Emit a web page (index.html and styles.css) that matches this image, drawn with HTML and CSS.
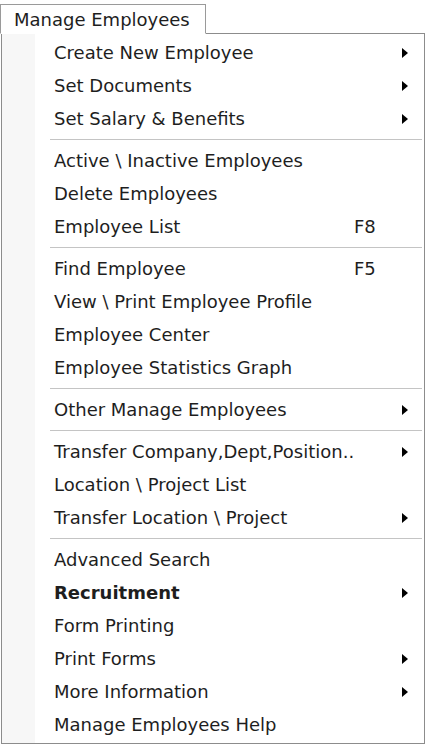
FILE: index.html
```html
<!DOCTYPE html>
<html lang="en">
<head>
<meta charset="UTF-8">
<meta name="viewport" content="width=device-width, initial-scale=1.0">
<title>Manage Employees</title>
<link rel="stylesheet" href="styles.css">
</head>
<body>
<div class="tab">Manage Employees</div>
<ul class="menu">
    <li class="item sub"><span class="label">Create New Employee</span><span class="key"></span><span class="arrow"></span></li>
    <li class="item sub"><span class="label">Set Documents</span><span class="key"></span><span class="arrow"></span></li>
    <li class="item sub"><span class="label">Set Salary &amp; Benefits</span><span class="key"></span><span class="arrow"></span></li>
    <li class="sep"></li>
    <li class="item"><span class="label">Active \ Inactive Employees</span></li>
    <li class="item"><span class="label">Delete Employees</span></li>
    <li class="item"><span class="label">Employee List</span><span class="key">F8</span></li>
    <li class="sep"></li>
    <li class="item"><span class="label">Find Employee</span><span class="key">F5</span></li>
    <li class="item"><span class="label">View \ Print Employee Profile</span></li>
    <li class="item"><span class="label">Employee Center</span></li>
    <li class="item"><span class="label">Employee Statistics Graph</span></li>
    <li class="sep"></li>
    <li class="item sub"><span class="label">Other Manage Employees</span><span class="key"></span><span class="arrow"></span></li>
    <li class="sep"></li>
    <li class="item sub"><span class="label">Transfer Company,Dept,Position..</span><span class="key"></span><span class="arrow"></span></li>
    <li class="item"><span class="label">Location \ Project List</span></li>
    <li class="item sub"><span class="label">Transfer Location \ Project</span><span class="key"></span><span class="arrow"></span></li>
    <li class="sep"></li>
    <li class="item"><span class="label">Advanced Search</span></li>
    <li class="item sub bold"><span class="label">Recruitment</span><span class="key"></span><span class="arrow"></span></li>
    <li class="item"><span class="label">Form Printing</span></li>
    <li class="item sub"><span class="label">Print Forms</span><span class="key"></span><span class="arrow"></span></li>
    <li class="item sub"><span class="label">More Information</span><span class="key"></span><span class="arrow"></span></li>
    <li class="item"><span class="label">Manage Employees Help</span></li>
</ul>
</body>
</html>
```

FILE: styles.css
```css
body {
    margin: 0;
    background: #fff;
    font-family: "DejaVu Sans", Verdana, sans-serif;
    font-size: 18px;
    color: #1e1e1e;
}

.tab {
    position: relative;
    z-index: 1;
    width: 191px;
    height: 28px;
    margin-top: 4px;
    padding-left: 13px;
    line-height: 29px;
    border: 1px solid #9a9a9a;
    border-bottom: 1px solid #fff;
    margin-bottom: -1px;
    background: #fff;
    box-sizing: content-box;
}

.menu {
    list-style: none;
    margin: 0 0 0 1px;
    padding: 2px 0;
    width: 424px;
    border: 1px solid #8c8c8c;
    box-sizing: border-box;
    background: linear-gradient(to right, #f7f7f7 33px, #fff 33px);
}

.item {
    display: grid;
    grid-template-columns: minmax(0, 1fr) 44px 26px;
    align-items: center;
    height: 33px;
    padding-left: 52px;
}

.label {
    white-space: nowrap;
}

.bold {
    font-weight: bold;
}

.key {
    white-space: nowrap;
}

.arrow {
    display: block;
    width: 0;
    height: 0;
    margin-left: 4px;
    border-top: 5px solid transparent;
    border-bottom: 5px solid transparent;
    border-left: 6px solid #000;
}

.sep {
    height: 9px;
    margin-left: 48px;
    margin-right: 2px;
    display: flex;
    flex-direction: column;
    justify-content: center;
}

.sep::before {
    content: "";
    display: block;
    height: 1px;
    background: #c4c4c4;
    border-bottom: 1px solid #fff;
}
```
